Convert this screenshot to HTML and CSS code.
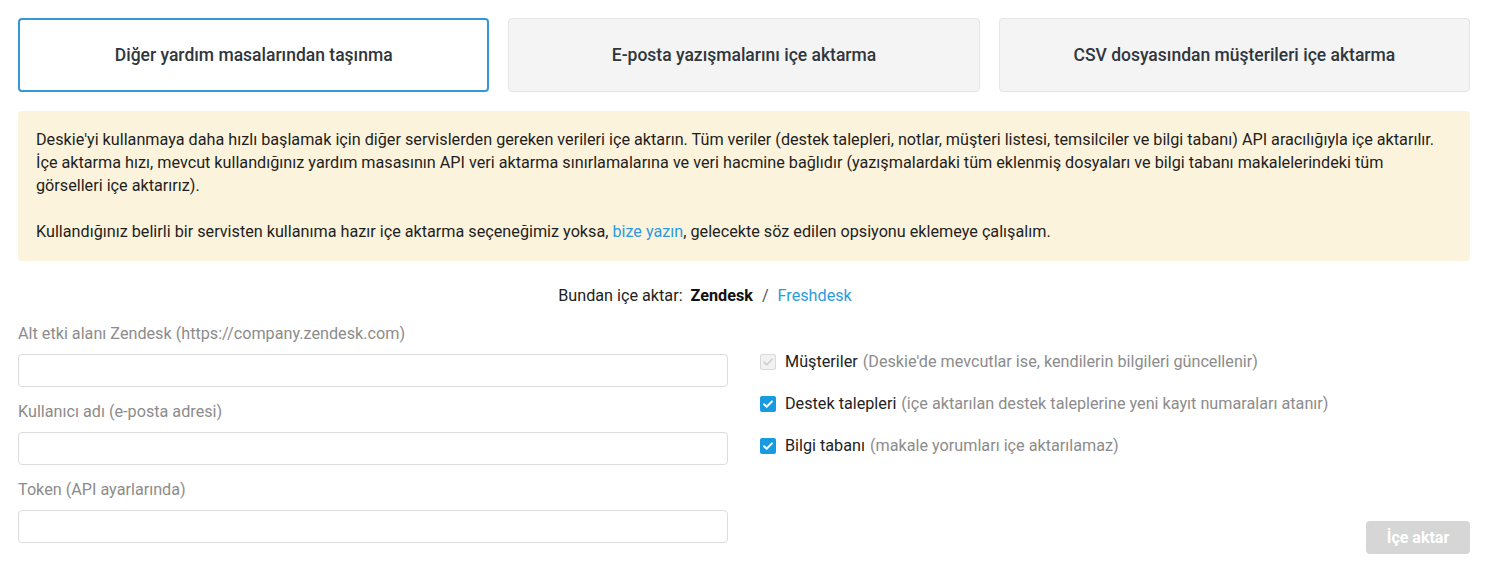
FILE: index.html
```html
<!DOCTYPE html>
<html lang="tr">
<head>
  <meta charset="UTF-8">
  <meta name="viewport" content="width=device-width, initial-scale=1.0">
  <title>İçe aktarma</title>
  <link rel="stylesheet" href="styles.css">
</head>
<body>
  <div class="page">
    <div class="tabs">
      <div class="tab active">Diğer yardım masalarından taşınma</div>
      <div class="tab">E-posta yazışmalarını içe aktarma</div>
      <div class="tab">CSV dosyasından müşterileri içe aktarma</div>
    </div>

    <div class="notice">
      <p>Deskie'yi kullanmaya daha hızlı başlamak için diğer servislerden gereken verileri içe aktarın. Tüm veriler (destek talepleri, notlar, müşteri listesi, temsilciler ve bilgi tabanı) API aracılığıyla içe aktarılır. İçe aktarma hızı, mevcut kullandığınız yardım masasının API veri aktarma sınırlamalarına ve veri hacmine bağlıdır (yazışmalardaki tüm eklenmiş dosyaları ve bilgi tabanı makalelerindeki tüm görselleri içe aktarırız).</p>
      <p>Kullandığınız belirli bir servisten kullanıma hazır içe aktarma seçeneğimiz yoksa, <a href="#">bize yazın</a>, gelecekte söz edilen opsiyonu eklemeye çalışalım.</p>
    </div>

    <div class="source">
      Bundan içe aktar:<b>Zendesk</b><span class="sep">/</span><a href="#">Freshdesk</a>
    </div>

    <div class="form">
      <div class="fields">
        <label class="field-label">Alt etki alanı Zendesk (https://company.zendesk.com)</label>
        <input class="field-input" type="text">
        <label class="field-label">Kullanıcı adı (e-posta adresi)</label>
        <input class="field-input" type="text">
        <label class="field-label">Token (API ayarlarında)</label>
        <input class="field-input" type="text">
      </div>

      <div class="options">
        <div class="option">
          <span class="check disabled">
            <svg viewBox="0 0 16 16" width="16" height="16"><path d="M4 8.2l2.7 2.6L12 5.4" fill="none" stroke="#cfcfcf" stroke-width="1.6" stroke-linecap="round" stroke-linejoin="round"/></svg>
          </span>
          <span class="option-name">Müşteriler</span><span class="option-hint">(Deskie'de mevcutlar ise, kendilerin bilgileri güncellenir)</span>
        </div>
        <div class="option">
          <span class="check">
            <svg viewBox="0 0 16 16" width="16" height="16"><path d="M4 8.2l2.7 2.6L12 5.4" fill="none" stroke="#fff" stroke-width="2" stroke-linecap="round" stroke-linejoin="round"/></svg>
          </span>
          <span class="option-name">Destek talepleri</span><span class="option-hint">(içe aktarılan destek taleplerine yeni kayıt numaraları atanır)</span>
        </div>
        <div class="option">
          <span class="check">
            <svg viewBox="0 0 16 16" width="16" height="16"><path d="M4 8.2l2.7 2.6L12 5.4" fill="none" stroke="#fff" stroke-width="2" stroke-linecap="round" stroke-linejoin="round"/></svg>
          </span>
          <span class="option-name">Bilgi tabanı</span><span class="option-hint">(makale yorumları içe aktarılamaz)</span>
        </div>
        <button class="import-button" disabled>İçe aktar</button>
      </div>
    </div>
  </div>
</body>
</html>
```

FILE: styles.css
```css
body {
  margin: 0;
  font-family: 'Roboto', 'Liberation Sans', sans-serif;
  color: #222;
  background: #fff;
}

.page {
  padding: 18px 18px 0;
}

.tabs {
  display: grid;
  grid-template-columns: repeat(3, 1fr);
  gap: 19px;
}

.tab {
  height: 74px;
  box-sizing: border-box;
  display: flex;
  align-items: center;
  justify-content: center;
  background-color: #f4f4f4;
  border: 1px solid #e5e5e5;
  border-radius: 4px;
  font-size: 17.5px;
  font-weight: 500;
  color: #30363c;
}

.tab.active {
  background-color: #fff;
  border: 2px solid #3497da;
}

.notice {
  margin-top: 19px;
  padding: 17px 18px 18px;
  background-color: #fcf3dc;
  border-radius: 4px;
  font-size: 16.2px;
  line-height: 23px;
  color: #1e1e1e;
}

.notice p {
  margin: 0;
}

.notice p + p {
  margin-top: 23px;
}

a {
  color: #2d9be0;
  text-decoration: none;
}

.source {
  margin-top: 25px;
  padding-right: 78px;
  text-align: center;
  font-size: 16.2px;
  line-height: 20px;
  color: #222;
}

.source b {
  margin-left: 8px;
  color: #111;
}

.source .sep {
  margin: 0 9px;
  color: #555;
}

.form {
  margin-top: 18px;
  display: grid;
  grid-template-columns: 710px 1fr;
  gap: 32px;
}

.fields {
  display: flex;
  flex-direction: column;
}

.field-label {
  font-size: 16.2px;
  line-height: 20px;
  color: #8c8c8c;
  margin-bottom: 10px;
}

.field-input {
  height: 33px;
  box-sizing: border-box;
  border: 1px solid #dcdcdc;
  border-radius: 4px;
  margin: 0 0 15px;
  font: inherit;
}

.options {
  display: flex;
  flex-direction: column;
  padding-top: 28px;
}

.option {
  display: flex;
  align-items: center;
  height: 20px;
  margin-bottom: 22px;
  font-size: 16.2px;
  line-height: 20px;
}

.check {
  width: 16px;
  height: 16px;
  flex: 0 0 16px;
  box-sizing: border-box;
  border-radius: 2px;
  background-color: #189ae0;
  margin-right: 9px;
  display: flex;
}

.check.disabled {
  background-color: #f2f2f2;
  border: 1px solid #d9d9d9;
}

.check.disabled svg {
  margin: -1px;
}

.option-name {
  color: #222;
  margin-right: 5px;
}

.option-hint {
  color: #8c8c8c;
}

.import-button {
  align-self: flex-end;
  margin-top: 43px;
  width: 104px;
  height: 33px;
  border: none;
  border-radius: 4px;
  background-color: #d6d6d6;
  color: #fff;
  font-family: inherit;
  font-size: 16px;
  font-weight: 700;
}
```
